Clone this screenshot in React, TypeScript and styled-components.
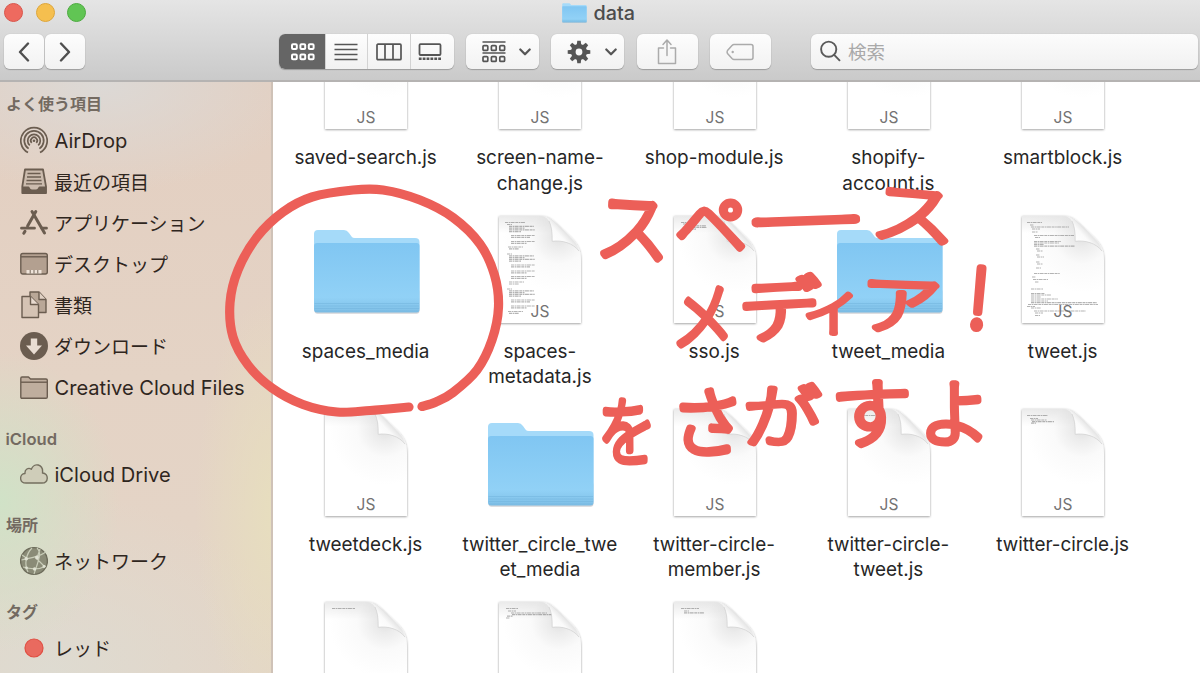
import React from "react";
import styled, { createGlobalStyle } from "styled-components";

const Global = createGlobalStyle`
  * { box-sizing: border-box; }
  html, body { margin: 0; padding: 0; overflow: hidden; }
  body { font-family: Inter, "Noto Sans CJK JP", sans-serif; background: #fff; }
  svg { display: block; flex: none; }
`;

const Window = styled.div`
  position: relative;
  width: 1200px;
  height: 673px;
  display: flex;
  flex-direction: column;
  overflow: hidden;
  background: #fff;
`;

const Header = styled.header`
  height: 82px;
  flex: none;
  background: linear-gradient(#e5e5e5, #cacaca);
  border-bottom: 2px solid #b5b3b2;
`;

const TitleBar = styled.div`
  height: 25px;
  display: grid;
  grid-template-columns: 1fr auto 1fr;
  align-items: center;
`;

const Lights = styled.div`
  display: flex;
  gap: 12.5px;
  padding-left: 4px;
  height: 24px;
  align-items: center;
`;

const Light = styled.span<{ $fill: string; $edge: string }>`
  width: 19px;
  height: 19px;
  border-radius: 50%;
  background: ${(p) => p.$fill};
  border: 1px solid ${(p) => p.$edge};
`;

const Title = styled.h1`
  display: flex;
  align-items: center;
  gap: 6.5px;
  margin: 0 0 0 -3px;
  font-size: 19.8px;
  font-weight: 500;
  line-height: 24px;
  color: #4c4c4c;
`;

const Toolbar = styled.div`
  display: flex;
  height: 53px;
  padding: 9px 2px 0 4px;
`;

const Button = styled.button<{ $w: number; $ml?: number; $gap?: number; $pl?: number }>`
  width: ${(p) => p.$w}px;
  height: 35px;
  margin: 0 0 0 ${(p) => p.$ml ?? 0}px;
  padding: 0 0 0 ${(p) => p.$pl ?? 0}px;
  display: flex;
  align-items: center;
  justify-content: center;
  gap: ${(p) => p.$gap ?? 0}px;
  border: 0;
  border-radius: 6px;
  background: linear-gradient(#fdfdfd, #f2f2f2);
  box-shadow: 0 1px 1px #9c9c9c, 0 0 1px #aaa;
`;

const Segments = styled.div`
  display: flex;
  width: 175px;
  height: 35px;
  margin-left: 193.5px;
  border-radius: 6px;
  overflow: hidden;
  background: linear-gradient(#fdfdfd, #f2f2f2);
  box-shadow: 0 1px 1px #9c9c9c, 0 0 1px #aaa;
`;

const Segment = styled.div<{ $active?: boolean; $w: number; $pl?: number; $pr?: number }>`
  width: ${(p) => p.$w}px;
  padding: 0 ${(p) => p.$pr ?? 0}px 0 ${(p) => p.$pl ?? 0}px;
  display: flex;
  align-items: center;
  justify-content: center;
  background: ${(p) => (p.$active ? "#656565" : "transparent")};
  & + & { border-left: 1px solid #d3d3d3; }
`;

const Search = styled.div`
  display: flex;
  align-items: center;
  gap: 7px;
  flex: 1;
  height: 35px;
  margin-left: 40.5px;
  padding: 0 0 1px 9px;
  border-radius: 6px;
  background: linear-gradient(#fcfcfc, #f1f1f1);
  box-shadow: 0 1px 1px #9c9c9c, 0 0 1px #aaa;
  font-size: 18.5px;
  color: #a9a9a9;
`;

const Body = styled.div`
  flex: 1;
  min-height: 0;
  display: flex;
`;

const Sidebar = styled.nav`
  width: 273px;
  flex: none;
  overflow: hidden;
  border-right: 2px solid #cfc2b7;
  background:
    radial-gradient(ellipse 120px 150px at 0 420px, rgba(208, 226, 199, 1), rgba(208, 226, 199, 0)),
    radial-gradient(ellipse 80px 220px at 275px 430px, rgba(231, 222, 190, 1), rgba(231, 222, 190, 0)),
    radial-gradient(ellipse 210px 110px at 100px 0, rgba(220, 217, 214, 1), rgba(220, 217, 214, 0)),
    radial-gradient(ellipse 250px 180px at 50px 591px, rgba(222, 219, 209, 1), rgba(222, 219, 209, 0)),
    linear-gradient(#e3cfc1, #e4d3c5 50%, #e4d5c7);
`;

const Heading = styled.h2<{ $first?: boolean; $latin?: boolean }>`
  margin: 0;
  height: ${(p) => (p.$first ? 38.4 : 45.9)}px;
  padding: ${(p) => (p.$first ? 9.5 : p.$latin ? 19 : 17.5)}px 0 0 ${(p) => (p.$latin ? 5.5 : 6)}px;
  font-size: ${(p) => (p.$latin ? 16.6 : 16)}px;
  font-weight: 600;
  line-height: 24px;
  color: #736a61;
  white-space: nowrap;
`;

const Item = styled.div<{ $latin?: boolean }>`
  height: 41.1px;
  display: flex;
  align-items: center;
  gap: ${(p) => (p.$latin ? 6.5 : 6)}px;
  padding-left: 20px;
  font-size: ${(p) => (p.$latin ? 20.1 : 19)}px;
  color: #2f261e;
  white-space: nowrap;
`;

const ItemLabel = styled.span<{ $latin?: boolean }>`
  padding-top: ${(p) => (p.$latin ? 0.6 : 0)}px;
  padding-bottom: ${(p) => (p.$latin ? 0 : 2)}px;
`;

const Files = styled.main`
  flex: 1;
  overflow: hidden;
  padding-left: 6px;
`;

const Grid = styled.div`
  display: grid;
  grid-template-columns: repeat(5, 174.25px);
  grid-auto-rows: 193.3px;
  margin-top: -66.8px;
`;

const File = styled.figure`
  margin: 0;
  display: flex;
  flex-direction: column;
  align-items: center;
`;

const Caption = styled.figcaption`
  margin: 10px 1px 0 0;
  font-size: 18.9px;
  line-height: 25.5px;
  text-align: center;
  white-space: pre;
  color: #262626;
`;

const Overlay = styled.svg`
  position: absolute;
  left: 0;
  top: 0;
  pointer-events: none;
`;

const INK = "#6b5d50";

const Icon = ({ children }: { children: React.ReactNode }) => (
  <svg width="28" height="30" viewBox="0 0 28 30" fill="none" stroke={INK} strokeWidth="1.4" strokeLinejoin="round">
    {children}
  </svg>
);

const AirDropIcon = () => (
  <Icon>
    <g strokeWidth="1.7" strokeLinecap="butt">
      <path d="M8 26.5 A13.2 13.2 0 1 1 20 26.5" />
      <path d="M8.6 22.6 A9.7 9.7 0 1 1 19.4 22.6" />
      <path d="M9.8 19.4 A6.3 6.3 0 1 1 18.2 19.4" />
      <path d="M11.7 16.8 A3.2 3.2 0 1 1 16.3 16.8" />
      <circle cx="14" cy="14.7" r="1.3" fill={INK} stroke="none" />
    </g>
  </Icon>
);

const RecentsIcon = () => (
  <Icon>
    <path d="M5 2.500 H23 L26 19.500 V26 H2.3 V19.500 Z" fill="#cbbbad" strokeWidth="1.8" />
    <path d="M2 19.500 H8.5 C10 19.500 9.5 22.500 12 22.500 H16 C18.5 22.500 18 19.500 19.5 19.500 H26.3 V26.500 H2 Z" fill={INK} stroke="none" />
    <path d="M7.5 6.500 H20.5 M7 10 H21 M6.5 13.500 H21.5 M6 16.800 H22" strokeWidth="1.3" />
  </Icon>
);

const AppsIcon = () => (
  <Icon>
    <g strokeWidth="3" strokeLinecap="round">
      <path d="M15.8 3.500 L7.6 18 M12 3.500 L24.5 25" />
      <path d="M1.5 20.2 H14.5 M21.8 20.2 H26.5" strokeWidth="2.8" />
      <path d="M5 23.3 L3.8 25.3" />
    </g>
  </Icon>
);

const DesktopIcon = () => (
  <Icon>
    <rect x="0.8" y="4.5" width="26.5" height="20.5" rx="2" fill="#b3a090" />
    <path d="M1 7.8 H27" />
    <path d="M6.5 24.5 V21 H21.5 V24.5 Z" fill="#efe4da" stroke="none" />
    <path d="M10.2 21 V24.5 M14 21 V24.5 M17.8 21 V24.5" strokeWidth="0.9" />
  </Icon>
);

const DocumentsIcon = () => (
  <Icon>
    <path d="M10 2 H19 L26 9.5 V22.5 H10 Z" fill="#b9a797" />
    <path d="M19 2 V9.5 H26" fill="#e0d1c4" />
    <path d="M2 6.5 H10.5 L18.5 14.5 V27.5 H2 Z" fill="#d5c3b4" />
    <path d="M10.5 6.5 V14.5 H18.5" fill="#e8dacf" />
  </Icon>
);

const DownloadsIcon = () => (
  <Icon>
    <circle cx="14" cy="15" r="14" fill={INK} stroke="none" />
    <path d="M10.8 7.5 H17.2 V14.5 H22 L14 23.5 L6 14.5 H10.8 Z" fill="#e9ddd2" stroke="none" />
  </Icon>
);

const SideFolderIcon = () => (
  <Icon>
    <path d="M0.8 24 V5.5 Q0.8 4 2 4 H8.5 L10.5 6 H26 Q27.3 6 27.3 7.3 V24 Q27.3 25.3 26 25.3 H2 Q0.8 25.3 0.8 24 Z" fill="#bfae9e" />
    <path d="M1 9.2 H27" />
  </Icon>
);

const CloudIcon = () => (
  <Icon>
    <path
      d="M6 24 C-1 24 -1 15 5 14.5 C4.5 10.5 8.5 8 11.3 10.3 C14 3 23.5 5 22.5 14 C29 14.5 28.8 24 22 24 Z"
      fill="#cfcdb9"
      stroke="#746f5f"
    />
  </Icon>
);

const NetworkIcon = () => (
  <Icon>
    <circle cx="14" cy="15" r="13.4" fill="#8a8b77" stroke="#6d6c5b" />
    <g stroke="#c9cdb9" strokeWidth="1.2">
      <path d="M12 2 C6 8 4 18 8 26 M17 2 C22 7 19 13 14 28 M1.5 14 C9 12 17 12 26 6 M3 21 C10 23 19 24 26 20 M16 12 L25 21 M2 9 L8 13 M20 3 L17 12" />
    </g>
    <g fill="#dfe1d2" stroke="none">
      <circle cx="6.3" cy="12.8" r="1.7" />
      <circle cx="17" cy="11.5" r="1.9" />
      <circle cx="14.6" cy="23" r="1.7" />
      <circle cx="6.5" cy="21.8" r="1.4" />
      <circle cx="24" cy="20.5" r="1.4" />
    </g>
  </Icon>
);

const RedTagIcon = () => (
  <Icon>
    <circle cx="14" cy="15" r="9" fill="#e96a5f" stroke="#e04f43" strokeWidth="1.2" />
  </Icon>
);

const Chevron = () => (
  <svg width="12" height="8" viewBox="0 0 12 8" fill="none" stroke="#555" strokeWidth="2.2" strokeLinecap="round" strokeLinejoin="round">
    <path d="M1.3 1.5 L6 6.3 L10.7 1.5" />
  </svg>
);

const Arrow = ({ d }: { d: string }) => (
  <svg width="12" height="20" viewBox="0 0 12 20" fill="none" stroke="#4f4f4f" strokeWidth="2.4" strokeLinecap="round" strokeLinejoin="round">
    <path d={d} />
  </svg>
);

const cells = (y: number) =>
  [1, 9.4, 17.8].map((x) => <rect key={`${x}-${y}`} x={x} y={y} width="4.8" height="4.8" rx="1" />);

const GearIcon = () => (
  <svg width="24" height="24" viewBox="-12 -12 24 24">
    <g fill="#555">
      {[0, 45, 90, 135, 180, 225, 270, 315].map((a) => (
        <path key={a} d="M-2.3 -7 L-1.7 -11.3 H1.7 L2.3 -7 Z" transform={`rotate(${a})`} />
      ))}
    </g>
    <circle r="5.7" fill="none" stroke="#555" strokeWidth="4.6" />
  </svg>
);

const FolderArt = ({ width, height }: { width: number; height: number }) => (
  <svg width={width} height={height} viewBox="0 0 108 86" preserveAspectRatio="none">
    <defs>
      <linearGradient id="folderFront" x1="0" y1="0" x2="0" y2="1">
        <stop offset="0" stopColor="#80c6f2" />
        <stop offset="0.78" stopColor="#91d1f6" />
        <stop offset="1" stopColor="#7fbfe6" />
      </linearGradient>
    </defs>
    <rect x="1.5" y="60" width="105" height="24.8" rx="3" fill="#b5b5bb" opacity="0.6" />
    <path d="M1 80 V5 Q1 1 5 1 H31 Q34 1 36 4 L38.5 7.5 Q39.5 9 42 9 H102 Q106.5 9 106.5 13 V80 Z" fill="#a5daf9" />
    <path d="M1 17 Q1 14 4 14 H103.5 Q106.5 14 106.5 17 V80.5 Q106.5 83.5 103.5 83.5 H4 Q1 83.5 1 80.5 Z" fill="url(#folderFront)" />
    <path d="M1.5 74.5 H106 M1.5 77 H106 M1.5 79.5 H106 M2 82 H105.5" stroke="#6fb1da" strokeWidth="0.8" opacity="0.6" />
  </svg>
);

type Line = [number, number, number];

const block = (y: number): Line[] => [
  [8, y, 5], [10, y + 1.8, 25], [10, y + 3.6, 16], [10, y + 5.4, 26], [10, y + 7.2, 12],
  [12, y + 11, 24], [12, y + 12.8, 19], [12, y + 17, 24], [12, y + 18.8, 16], [9, y + 22.5, 15], [10, y + 24.3, 10],
];

const PREVIEWS: Record<string, Line[]> = {
  blank: [],
  metadata: [[6, 6.5, 20], ...block(8.5), ...block(38).slice(0, 9), [12, 60.5, 24], [12, 62.3, 16], [10, 66, 15], [10, 68, 10], ...block(73)],
  sso: [[7, 6.5, 12], [9, 8, 9], [12, 9.8, 20], [12, 11.5, 21], [10, 13.2, 12]],
  tweet: [
    [5, 6.5, 15], [8, 9, 4], [9, 11, 38], [10, 13, 8], [10, 16, 6], [12, 19.5, 40], [13, 21.5, 5],
    [12, 25.5, 27], [12, 27, 25], [12, 28.5, 10], [12, 30.2, 41], [14, 33, 4], [15, 35, 6], [14, 39, 4],
    [15, 41, 7], [14, 46, 4], [15, 48, 6], [14, 52, 5], [12, 57.5, 26], [10, 61, 4], [11, 63.5, 15],
    [13, 66, 4], [9, 73, 12], [9, 77.5, 14], [9, 79, 20], [9, 81, 10], [9, 83, 27], [9, 85, 17],
    [9, 86.7, 66], [6, 88.5, 70], [5, 90.5, 8], [9, 92, 10], [12, 95, 52], [13, 97, 8], [13, 99.5, 5],
  ],
  circle: [[5, 6.5, 21], [8, 9.5, 8], [9, 11, 16], [10, 12.6, 22], [9, 14.2, 5]],
  faint: [[7, 6.5, 23]],
  wide: [[7, 6.5, 12], [9, 9, 8], [12, 11, 36], [13, 12.7, 44], [8, 14.2, 6], [7, 16, 4]],
  short: [[7, 6.5, 18], [10, 9, 5], [10, 10.8, 20]],
};

const PAGE = "M0 0 H41 C50 0 54 4 60 10 L72 21.5 C79 28.5 82 34 82 45 V107 H0 Z";

const DocumentArt = ({ preview, tag }: { preview: string; tag: boolean }) => (
  <svg width="92" height="120" viewBox="-5 -7 92 120">
    <defs>
      <radialGradient id="page" gradientUnits="userSpaceOnUse" cx="60" cy="20" r="56">
        <stop offset="0" stopColor="#dfdfdf" />
        <stop offset="0.2" stopColor="#ececec" />
        <stop offset="0.5" stopColor="#fafafa" />
        <stop offset="1" stopColor="#fff" />
      </radialGradient>
      <linearGradient id="topShade" x1="0" y1="0" x2="0" y2="1">
        <stop offset="0" stopColor="#000" stopOpacity="0.08" />
        <stop offset="0.16" stopColor="#000" stopOpacity="0" />
      </linearGradient>
      <linearGradient id="curl" gradientUnits="userSpaceOnUse" x1="53" y1="25" x2="66" y2="13">
        <stop offset="0" stopColor="#fff" />
        <stop offset="0.55" stopColor="#fafafa" />
        <stop offset="1" stopColor="#dedede" />
      </linearGradient>
      <filter id="pageShadow" x="-10%" y="-10%" width="120%" height="120%">
        <feDropShadow dx="0" dy="0.7" stdDeviation="1" floodColor="#000" floodOpacity="0.42" />
      </filter>
      <clipPath id="pageClip">
        <path d="M0 0 H43 Q53 1 53.5 25 Q74 25 82 44 V107 H0 Z" />
      </clipPath>
    </defs>
    <path d={PAGE} fill="url(#page)" filter="url(#pageShadow)" />
    <path d={PAGE} fill="url(#topShade)" />
    <path d="M44 0.3 C50 2 53.5 9 53.2 25.3 C63 24 74 27 80 35 C78 28 76 26 71 21.5 L60 11 C54 4.5 50 1 44 0.3 Z" fill="url(#curl)" />
    <path d="M50 5 C52.500 10 53.400 17 53.200 25.300 C63 24 74 27 80 35" fill="none" stroke="#cfcfcf" strokeWidth="0.7" />
    <g clipPath="url(#pageClip)">
      {PREVIEWS[preview].map(([x, y, w], i) => (
        <path key={i} d={`M${x} ${y} h${w}`} stroke="#777" strokeWidth="1.2" strokeDasharray="3 0.6 1.5 0.5 4 0.7" opacity="0.55" />
      ))}
    </g>
    {tag && (
      <text x="41" y="101" textAnchor="middle" fontFamily="Inter" fontSize="15.5" fill="#737373">
        JS
      </text>
    )}
  </svg>
);

const FolderSlot = styled.div`
  height: 120px;
  padding: 20px 0 0 1.5px;
`;

type Entry = { lines: string[]; preview?: string; folder?: boolean };

const FILES: Entry[] = [
  { lines: ["saved-search.js"], preview: "blank" },
  { lines: ["screen-name-", "change.js"], preview: "blank" },
  { lines: ["shop-module.js"], preview: "blank" },
  { lines: ["shopify-", "account.js"], preview: "blank" },
  { lines: ["smartblock.js"], preview: "blank" },
  { lines: ["spaces_media"], folder: true },
  { lines: ["spaces-", "metadata.js"], preview: "metadata" },
  { lines: ["sso.js"], preview: "sso" },
  { lines: ["tweet_media"], folder: true },
  { lines: ["tweet.js"], preview: "tweet" },
  { lines: ["tweetdeck.js"], preview: "blank" },
  { lines: ["twitter_circle_twe", "et_media"], folder: true },
  { lines: ["twitter-circle-", "member.js"], preview: "blank" },
  { lines: ["twitter-circle-", "tweet.js"], preview: "faint" },
  { lines: ["twitter-circle.js"], preview: "circle" },
  { lines: [], preview: "faint" },
  { lines: [], preview: "wide" },
  { lines: [], preview: "short" },
];

type Point = [number, number];

const smooth = (pts: Point[]) =>
  pts.slice(0, -1).reduce((d, p, i) => {
    const a = pts[i - 1] ?? p;
    const b = pts[i + 1];
    const c = pts[i + 2] ?? b;
    return `${d} C${p[0] + (b[0] - a[0]) / 6} ${p[1] + (b[1] - a[1]) / 6} ${b[0] - (c[0] - p[0]) / 6} ${b[1] - (c[1] - p[1]) / 6} ${b[0]} ${b[1]}`;
  }, `M${pts[0][0]} ${pts[0][1]}`);

const RING: Point[] = [
  [422, 406.5], [436, 402], [453, 392.5], [477, 370], [492, 340], [498.5, 307], [494.5, 275], [480, 244],
  [453, 217.5], [420, 200], [383, 190], [353, 190], [312, 197], [283, 212], [257, 237], [238, 270],
  [230, 303], [233, 337], [248, 365], [272, 388], [303, 404.5], [337, 412], [370, 410.5], [409, 407],
];

// Marker note: character, centre x, centre y, horizontal and vertical scale, slant
type Mark = [string, number, number, number, number, number];

const NOTE: Mark[] = [
  ["ス", 633, 227, 1, 1.06, 3],
  ["ペ", 711, 225, 0.98, 0.95, 0],
  ["ー", 806, 221, 1.68, 1, -2],
  ["ス", 914, 213, 1.16, 0.93, 5],
  ["メ", 703, 315, 0.86, 1.02, 0],
  ["デ", 780, 309, 1.12, 0.95, -3],
  ["ィ", 833, 307, 0.9, 0.8, 0],
  ["ア", 901, 304, 1.12, 0.88, 2],
  ["!", 979, 297, 1, 1.08, 5],
  ["を", 627, 431, 0.78, 1, 0],
  ["さ", 708, 422, 1, 1.04, -3],
  ["が", 782, 416, 1.05, 0.92, 0],
  ["す", 872, 413, 1.08, 1.02, -2],
  ["よ", 955, 413, 0.97, 0.98, 0],
];

const Annotation = () => (
  <Overlay width="1200" height="673" viewBox="0 0 1200 673">
    <path d={smooth(RING)} fill="none" stroke="#ec5f58" strokeWidth="9.2" strokeLinecap="round" strokeLinejoin="round" />
    <g
      fontFamily='"Noto Sans CJK JP", sans-serif'
      fontSize="74"
      fontWeight="100"
      fill="#ec5f58"
      stroke="#ec5f58"
      strokeWidth="7.2"
      strokeLinejoin="round"
      textAnchor="middle"
    >
      {NOTE.map(([ch, x, y, sx, sy, slant], i) => (
        <text key={i} y="28" transform={`translate(${x} ${y}) rotate(${slant}) scale(${sx} ${sy})`}>
          {ch}
        </text>
      ))}
    </g>
  </Overlay>
);

type Place = { icon: React.ReactNode; name: string; latin?: boolean };

const SECTIONS: { title: string; latin?: boolean; places: Place[] }[] = [
  {
    title: "よく使う項目",
    places: [
      { icon: <AirDropIcon />, name: "AirDrop", latin: true },
      { icon: <RecentsIcon />, name: "最近の項目" },
      { icon: <AppsIcon />, name: "アプリケーション" },
      { icon: <DesktopIcon />, name: "デスクトップ" },
      { icon: <DocumentsIcon />, name: "書類" },
      { icon: <DownloadsIcon />, name: "ダウンロード" },
      { icon: <SideFolderIcon />, name: "Creative Cloud Files", latin: true },
    ],
  },
  { title: "iCloud", latin: true, places: [{ icon: <CloudIcon />, name: "iCloud Drive", latin: true }] },
  { title: "場所", places: [{ icon: <NetworkIcon />, name: "ネットワーク" }] },
  { title: "タグ", places: [{ icon: <RedTagIcon />, name: "レッド" }] },
];

export default function App() {
  return (
    <Window>
      <Global />
      <Header>
        <TitleBar>
          <Lights>
            <Light $fill="#ee6a5f" $edge="#d9564c" />
            <Light $fill="#f5bf4f" $edge="#dea63a" />
            <Light $fill="#61c554" $edge="#4dab40" />
          </Lights>
          <Title>
            <FolderArt width={25} height={20} />
            data
          </Title>
        </TitleBar>
        <Toolbar>
          <Button $w={39.5}><Arrow d="M10 1.5 L2 10 L10 18.5" /></Button>
          <Button $w={40} $ml={1.5}><Arrow d="M2 1.5 L10 10 L2 18.5" /></Button>
          <Segments>
            <Segment $active $w={46.5} $pl={2.5}>
              <svg width="24" height="18" viewBox="0 0 24 18" fill="none" stroke="#fff" strokeWidth="2">
                {cells(1.2)}
                {cells(11.4)}
              </svg>
            </Segment>
            <Segment $w={42} $pr={1.5}>
              <svg width="24" height="18" viewBox="0 0 24 18" stroke="#555" strokeWidth="1.7">
                <path d="M0.5 1.5 H23.5 M0.5 6.5 H23.5 M0.5 11.5 H23.5 M0.5 16.5 H23.5" />
              </svg>
            </Segment>
            <Segment $w={43} $pr={1}>
              <svg width="26" height="18" viewBox="0 0 26 18" fill="none" stroke="#555" strokeWidth="1.7">
                <rect x="1" y="1.2" width="24" height="15.5" rx="1" />
                <path d="M9 1 V17 M17 1 V17" />
              </svg>
            </Segment>
            <Segment $w={43.5} $pr={5}>
              <svg width="24" height="18" viewBox="0 0 24 18" fill="none" stroke="#555" strokeWidth="1.8">
                <rect x="1.5" y="1.2" width="21" height="10.8" rx="1" />
                <path d="M0.8 15.8 H23" strokeWidth="2.6" strokeDasharray="2.8 1.08" />
              </svg>
            </Segment>
          </Segments>
          <Button $w={73} $ml={12.5} $gap={13.5} $pl={7.5}>
            <svg width="24" height="24" viewBox="0 0 24 24" fill="none" stroke="#555" strokeWidth="1.7">
              <path d="M0.5 2 H23.5 M0.5 13 H23.5" />
              {cells(5.6)}
              {cells(16.6)}
            </svg>
            <Chevron />
          </Button>
          <Button $w={73} $ml={12} $gap={14} $pl={8}>
            <GearIcon />
            <Chevron />
          </Button>
          <Button $w={61} $ml={12.5}>
            <svg width="20" height="28" viewBox="0 0 20 28" fill="none" stroke="#ababab" strokeWidth="1.5" strokeLinecap="round" strokeLinejoin="round">
              <path d="M6.5 10 H1.5 V25.5 H18.5 V10 H13.5 M10 17.5 V2.5 M6 6.5 L10 2 L14 6.5" />
            </svg>
          </Button>
          <Button $w={61} $ml={12}>
            <svg width="28" height="18" viewBox="0 0 28 18" fill="none" stroke="#ababab" strokeWidth="1.5" strokeLinejoin="round">
              <path d="M8 1.5 H25 Q27 1.5 27 3.5 V14.5 Q27 16.5 25 16.5 H8 Q7 16.5 6 15.5 L1.5 10.5 Q0.7 9 1.5 7.5 L6 2.5 Q7 1.5 8 1.5 Z" />
              <circle cx="6.7" cy="9" r="1.2" fill="#ababab" stroke="none" />
            </svg>
          </Button>
          <Search>
            <svg width="21" height="22" viewBox="0 0 21 22" fill="none" stroke="#5a5a5a" strokeWidth="1.9" strokeLinecap="round">
              <circle cx="8.7" cy="9.2" r="7.6" />
              <path d="M14.2 14.8 L19.5 20.3" />
            </svg>
            検索
          </Search>
        </Toolbar>
      </Header>
      <Body>
        <Sidebar>
          {SECTIONS.map((s, i) => (
            <React.Fragment key={s.title}>
              <Heading $first={i === 0} $latin={s.latin}>{s.title}</Heading>
              {s.places.map((p) => (
                <Item key={p.name} $latin={p.latin}>
                  {p.icon}
                  <ItemLabel $latin={p.latin}>{p.name}</ItemLabel>
                </Item>
              ))}
            </React.Fragment>
          ))}
        </Sidebar>
        <Files>
          <Grid>
            {FILES.map((f, i) => (
              <File key={i}>
                {f.folder ? (
                  <FolderSlot><FolderArt width={108} height={86} /></FolderSlot>
                ) : (
                  <DocumentArt preview={f.preview ?? "blank"} tag={f.lines.length > 0} />
                )}
                {f.lines.length > 0 && <Caption>{f.lines.join("\n")}</Caption>}
              </File>
            ))}
          </Grid>
        </Files>
      </Body>
      <Annotation />
    </Window>
  );
}
